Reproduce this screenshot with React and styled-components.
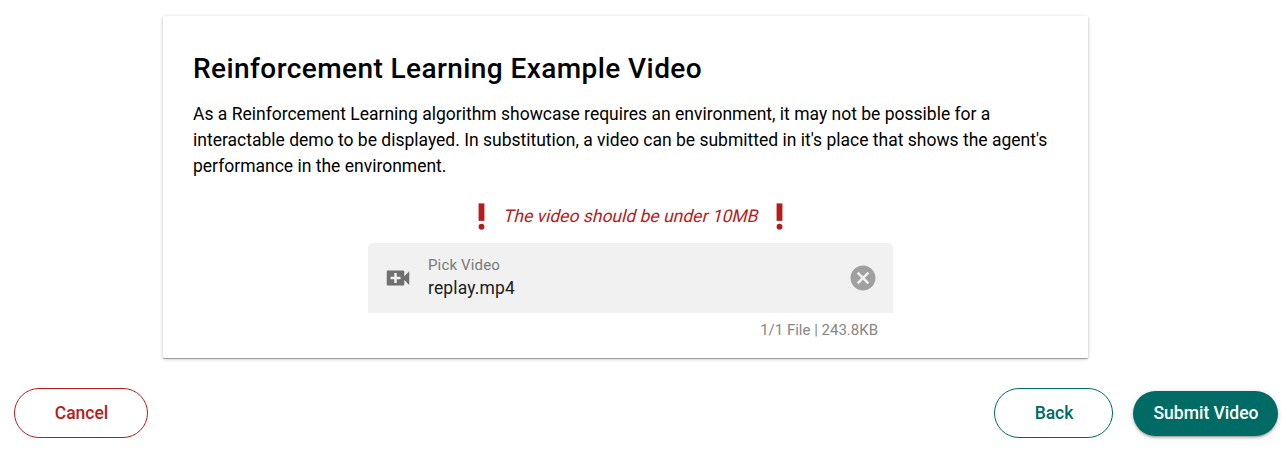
import React from 'react';
import styled, { createGlobalStyle } from 'styled-components';

const GlobalStyle = createGlobalStyle`
  *, *::before, *::after { box-sizing: border-box; }
  body {
    margin: 0;
    background: #fff;
    color: #000;
    font-family: Roboto, 'Liberation Sans', sans-serif;
    font-size: 17.5px;
    line-height: 26px;
  }
`;

const Page = styled.div`
  height: 450px;
  padding-top: 16px;
  display: flex;
  flex-direction: column;
  overflow: hidden;
`;

const Card = styled.main`
  width: 925px;
  height: 342px;
  margin-left: 163px;
  padding: 30px;
  border-radius: 1px;
  box-shadow: 0 1px 4px rgba(0, 0, 0, 0.2), 0 1px 1px rgba(0, 0, 0, 0.2),
    0 1px 1px rgba(0, 0, 0, 0.14);
  display: flex;
  flex-direction: column;
`;

const Title = styled.h1`
  margin: 3px 0 13px;
  font-size: 28px;
  line-height: 39px;
  font-weight: 500;
  letter-spacing: 0.42px;
`;

const Description = styled.p`
  margin: 0;
  width: 865px;
`;

const Warning = styled.div`
  height: 35px;
  margin-top: 19.5px;
  padding-left: 10.5px;
  display: flex;
  align-items: center;
  justify-content: center;
  gap: 4.3px;
  color: #b71c1c;
`;

const SlantedText = styled.span`
  transform: translate(1.3px, -0.5px) skewX(-14deg);
`;

const Icon = styled.svg`
  display: block;
  flex: none;
  width: ${({ $size }) => $size}px;
  height: ${({ $size }) => $size}px;
  fill: currentColor;
`;

const Upload = styled.div`
  width: 525px;
  margin: 9px 0 0 175px;
`;

const Field = styled.div`
  height: 70px;
  padding: 0 15px;
  display: flex;
  align-items: center;
  background: #f1f1f1;
  border-radius: 5px 5px 0 0;
  color: #707070;
`;

const FieldText = styled.div`
  flex: 1;
  margin-left: 15px;
`;

const Label = styled.div`
  font-size: 15px;
  line-height: 22px;
  margin: -1px 0 1px;
  letter-spacing: 0.15px;
  color: #7b7b7b;
`;

const FileName = styled.div`
  line-height: 23px;
  letter-spacing: 0.15px;
  color: #202020;
`;

const ClearButton = styled.button`
  padding: 0;
  border: 0;
  background: none;
  color: #a0a0a0;
`;

const Counter = styled.div`
  padding: 10px 15px 0;
  font-size: 15px;
  line-height: 15px;
  text-align: right;
  color: #868686;
`;

const Actions = styled.footer`
  margin-top: 30px;
  height: 50px;
  padding: 0 10px 0 14px;
  display: flex;
  align-items: center;
`;

const Button = styled.button`
  width: ${({ $width }) => $width}px;
  height: 50px;
  padding: 0 0 0 1px;
  border: 1px solid currentColor;
  border-radius: 25px;
  background: #fff;
  color: ${({ $color }) => $color};
  font: 500 17.5px/26px Roboto, 'Liberation Sans', sans-serif;
  white-space: nowrap;
`;

const BackButton = styled(Button)`
  margin-left: auto;
`;

const SubmitButton = styled(Button)`
  height: 45px;
  margin: 1px 0 0 20px;
  padding-bottom: 2px;
  border: 0;
  background: #006a64;
  box-shadow: 0 1px 5px rgba(0, 0, 0, 0.2), 0 2px 2px rgba(0, 0, 0, 0.14),
    0 3px 1px -2px rgba(0, 0, 0, 0.12);
`;

const Exclamation = () => (
  <Icon viewBox="0 0 24 24" $size={35} aria-hidden="true">
    <circle cx="12" cy="19" r="2" />
    <path d="M10 3h4v12h-4z" />
  </Icon>
);

const VideoCall = () => (
  <Icon viewBox="0 0 24 24" $size={30} aria-hidden="true">
    <path d="M17 10.5V7c0-.55-.45-1-1-1H4c-.55 0-1 .45-1 1v10c0 .55.45 1 1 1h12c.55 0 1-.45 1-1v-3.5l4 4v-11l-4 4zM14 13h-3v3H9v-3H6v-2h3V8h2v3h3v2z" />
  </Icon>
);

const Clear = () => (
  <Icon viewBox="0 0 24 24" $size={30} aria-hidden="true">
    <path d="M12 2C6.47 2 2 6.47 2 12s4.47 10 10 10 10-4.47 10-10S17.53 2 12 2zm5 13.59L15.59 17 12 13.41 8.41 17 7 15.59 10.59 12 7 8.41 8.41 7 12 10.59 15.59 7 17 8.41 13.41 12 17 15.59z" />
  </Icon>
);

export default function App() {
  return (
    <Page>
      <GlobalStyle />
      <Card>
        <Title>Reinforcement Learning Example Video</Title>
        <Description>
          As a Reinforcement Learning algorithm showcase requires an environment, it may not be
          possible for a interactable demo to be displayed. In substitution, a video can be
          submitted in it's place that shows the agent's performance in the environment.
        </Description>
        <Warning>
          <Exclamation />
          <SlantedText>The video should be under 10MB</SlantedText>
          <Exclamation />
        </Warning>
        <Upload>
          <Field>
            <VideoCall />
            <FieldText>
              <Label>Pick Video</Label>
              <FileName>replay.mp4</FileName>
            </FieldText>
            <ClearButton aria-label="Clear"><Clear /></ClearButton>
          </Field>
          <Counter>1/1 File | 243.8KB</Counter>
        </Upload>
      </Card>
      <Actions>
        <Button $width={134} $color="#b71c1c">Cancel</Button>
        <BackButton $width={119} $color="#006a64">Back</BackButton>
        <SubmitButton $width={145} $color="#fff">Submit Video</SubmitButton>
      </Actions>
    </Page>
  );
}
